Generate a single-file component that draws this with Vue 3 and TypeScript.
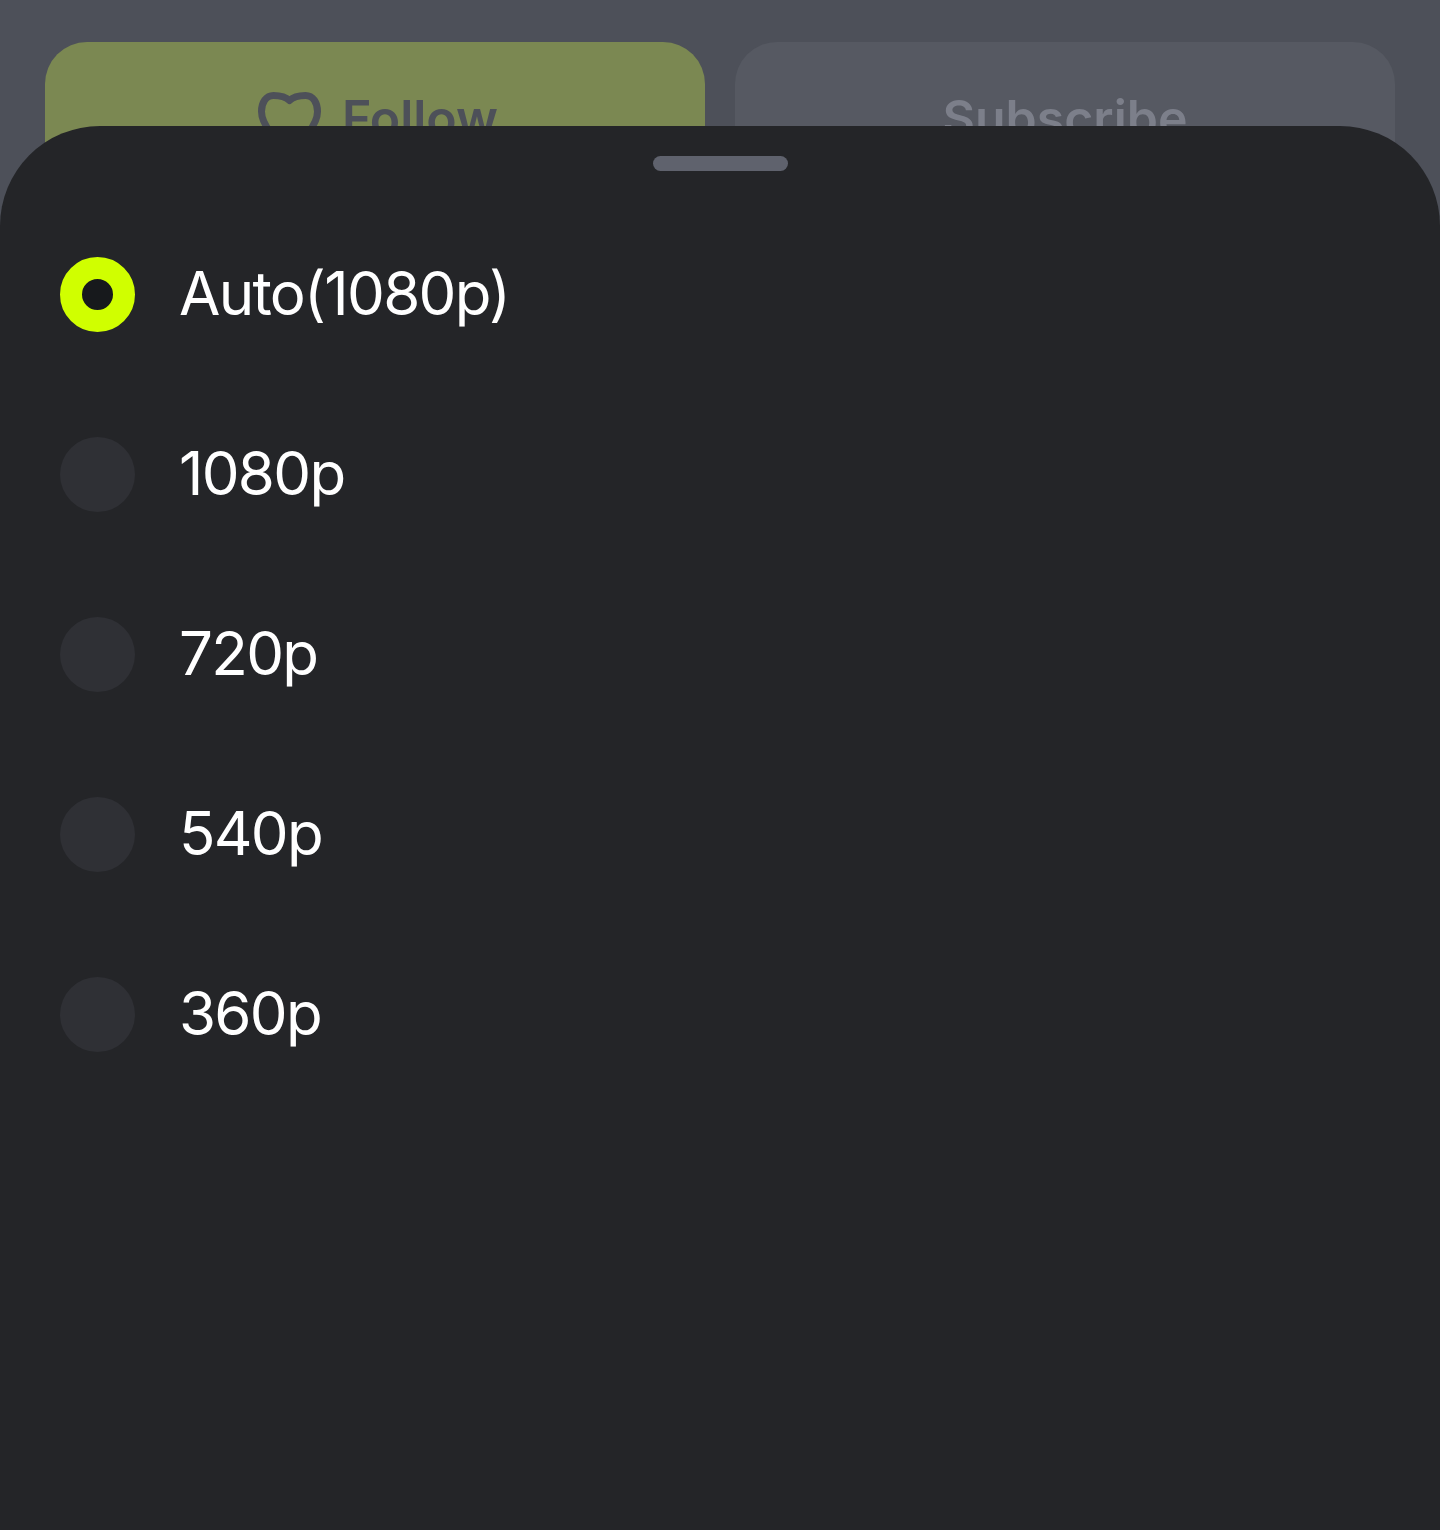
<template>
  <div class="page">
    <div class="actions">
      <button class="action action-follow">
        <svg class="heart" viewBox="0 -8.5 64 72" fill="none">
          <path
            d="M31.5 10C28 6.5 22 5 15.5 5C8 5 3.5 12 3.5 21C3.5 34 18 51 31.5 60C45 51 59.5 34 59.5 21C59.5 12 55 5 47.5 5C41 5 35 6.5 31.5 10Z"
            stroke="currentColor"
            stroke-width="7"
            stroke-linejoin="round"
          />
        </svg>
        <span>Follow</span>
      </button>
      <button class="action action-subscribe">
        <span>Subscribe</span>
      </button>
    </div>

    <section class="sheet">
      <div class="handle" />
      <ul class="options">
        <li v-for="option in options" :key="option" class="option">
          <span :class="['radio', { 'radio-on': option === selected }]" />
          <span class="label">{{ option }}</span>
        </li>
      </ul>
    </section>
  </div>
</template>

<script setup lang="ts">
const options: string[] = ['Auto(1080p)', '1080p', '720p', '540p', '360p']
const selected = 'Auto(1080p)'
</script>

<style>
html,
body {
  margin: 0;
  background: #4d5059;
}
</style>

<style scoped>
.page {
  position: relative;
  width: 1440px;
  height: 1530px;
  overflow: hidden;
  background: #4d5059;
  font-family: Inter, 'Liberation Sans', sans-serif;
}

.actions {
  display: flex;
  gap: 30px;
  padding: 42px 45px 0;
}

.action {
  flex: 1;
  height: 152px;
  display: flex;
  align-items: center;
  justify-content: center;
  gap: 20px;
  padding: 0;
  border: none;
  border-radius: 42px;
  font-family: inherit;
  font-size: 50px;
  font-weight: 600;
}

.action-follow {
  background: #7b8852;
  color: #4d5059;
}

.action-subscribe {
  background: #565962;
  color: #7c7f8a;
}

.heart {
  width: 64px;
  height: 72px;
  flex: none;
  margin-left: 6px;
}

.sheet {
  position: absolute;
  left: 0;
  right: 0;
  top: 126px;
  bottom: 0;
  background: #242528;
  border-radius: 100px 100px 0 0;
}

.handle {
  width: 135px;
  height: 15px;
  margin: 30px auto 0;
  border-radius: 8px;
  background: #5f626d;
}

.options {
  list-style: none;
  margin: 33px 0 0;
  padding: 0 60px;
}

.option {
  height: 180px;
  display: flex;
  align-items: center;
  gap: 44px;
}

.radio {
  width: 75px;
  height: 75px;
  flex: none;
  box-sizing: border-box;
  border-radius: 50%;
  background: #2f3035;
}

.radio-on {
  background: #17191c;
  border: 22.5px solid #d0ff00;
}

.label {
  color: #fff;
  font-size: 60px;
  line-height: 72px;
  letter-spacing: -1.7px;
  padding-bottom: 2px;
}
</style>
